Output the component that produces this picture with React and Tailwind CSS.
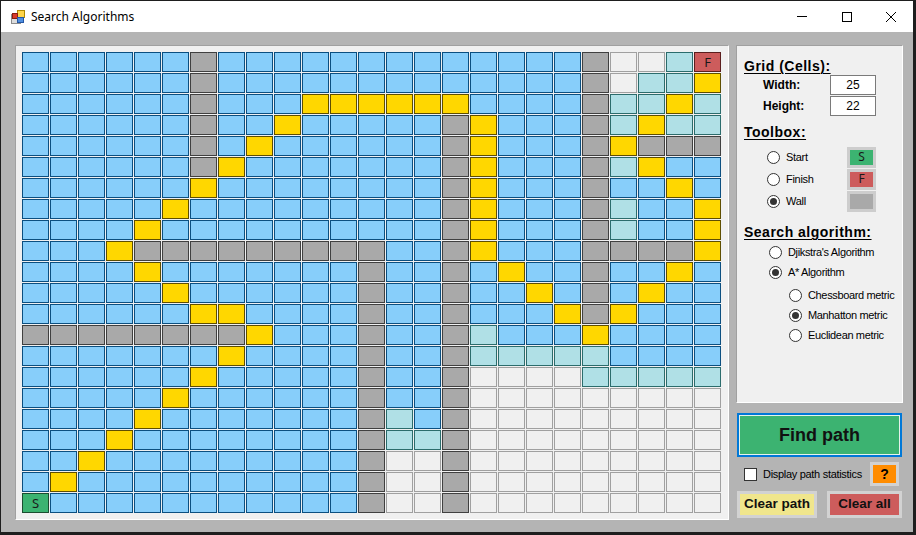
import React from "react";

// grid state: B visited, W wall, Y path, C frontier, E empty, S start, F finish
const ROWS = [
  "BBBBBBWBBBBBBBBBBBBBWEECF",
  "BBBBBBWBBBBBBBBBBBBBWECCY",
  "BBBBBBWBBBYYYYYYBBBBWCCYC",
  "BBBBBBWBBYBBBBBWYBBBWCYCC",
  "BBBBBBWBYBBBBBBWYBBBWYWWW",
  "BBBBBBWYBBBBBBBWYBBBWCYBB",
  "BBBBBBYBBBBBBBBWYBBBWBBYB",
  "BBBBBYBBBBBBBBBWYBBBWCBBY",
  "BBBBYBBBBBBBBBBWYBBBWCBBY",
  "BBBYWWWWWWWWWBBWYBBBWWWWY",
  "BBBBYBBBBBBBWBBWBYBBWBBYB",
  "BBBBBYBBBBBBWBBWBBYBWBYBB",
  "BBBBBBYYBBBBWBBWBBBYWYBBB",
  "WWWWWWWWYBBBWBBWCBBBYBBBB",
  "BBBBBBBYBBBBWBBWCCCCCBBBB",
  "BBBBBBYBBBBBWBBWEEEECCCCC",
  "BBBBBYBBBBBBWBBWEEEEEEEEE",
  "BBBBYBBBBBBBWCBWEEEEEEEEE",
  "BBBYBBBBBBBBWCCWEEEEEEEEE",
  "BBYBBBBBBBBBWEEWEEEEEEEEE",
  "BYBBBBBBBBBBWEEWEEEEEEEEE",
  "SBBBBBBBBBBBWEEWEEEEEEEEE",
];

const CELL = {
  B: "bg-[#87cefa] border-[#0b4f80]",
  W: "bg-[#a9a9a9] border-[#404040]",
  Y: "bg-[#ffd700] border-[#5e4e00]",
  C: "bg-[#b0e0e6] border-[#2b6c6c]",
  E: "bg-[#f0f0f0] border-[#a0a0a0]",
  S: "bg-[#3cb371] border-[#1b4d30]",
  F: "bg-[#cd5c5c] border-[#5b1e1e]",
};

function AppIcon() {
  return (
    <svg width="14" height="14" viewBox="0 0 14 14">
      <rect x="0.5" y="4.5" width="9" height="9" fill="#dcdcdc" stroke="#8c8c8c" />
      <rect x="6.5" y="0.5" width="7" height="7" fill="#ffd54a" stroke="#b08a00" />
      <rect x="1.5" y="3.5" width="5" height="5" fill="#d83b2b" stroke="#8a1c10" />
      <rect x="6.5" y="7.5" width="6" height="5" fill="#4f8fe0" stroke="#2456a4" />
    </svg>
  );
}

function TitleBar() {
  return (
    <div className="flex h-[31px] items-center bg-white">
      <div className="ml-[10px]">
        <AppIcon />
      </div>
      <span className="ml-[6px] font-['Noto_Sans',sans-serif] text-[12px] text-black">
        Search Algorithms
      </span>
      <div className="ml-auto flex h-full">
        <div className="flex w-[45px] items-center justify-center">
          <div className="h-px w-[10px] bg-black" />
        </div>
        <div className="flex w-[45px] items-center justify-center">
          <div className="h-[10px] w-[10px] border border-black" />
        </div>
        <div className="flex w-[44px] items-center justify-center">
          <svg width="10" height="10" viewBox="0 0 10 10">
            <path d="M0 0L10 10M10 0L0 10" stroke="#000" strokeWidth="1" />
          </svg>
        </div>
      </div>
    </div>
  );
}

function GridPanel() {
  return (
    <div className="h-[475px] w-[714px] border border-t-[#a0a0a0] border-l-[#a0a0a0] border-b-white border-r-white bg-[#f0f0f0] pl-[6px] pt-[6px]">
      <div className="grid grid-cols-[repeat(25,27px)] auto-rows-[20px] gap-px">
        {ROWS.map((row, r) =>
          row.split("").map((c, i) => (
            <div
              key={`${r}-${i}`}
              className={`flex items-center justify-center border font-['Noto_Sans',sans-serif] text-[13px] leading-none text-[#1a1a1a] ${CELL[c]}`}
            >
              {c === "S" || c === "F" ? c : null}
            </div>
          ))
        )}
      </div>
    </div>
  );
}

function Radio({ checked }) {
  return (
    <span className="flex h-[13px] w-[13px] shrink-0 items-center justify-center rounded-full border border-[#333] bg-white">
      {checked && <span className="h-[7px] w-[7px] rounded-full bg-[#333]" />}
    </span>
  );
}

function Heading({ children, className = "" }) {
  return (
    <div
      className={`flex h-[18px] items-center pl-[7px] text-[14px] font-bold leading-none tracking-[0.5px] text-black underline decoration-1 underline-offset-[2px] ${className}`}
    >
      {children}
    </div>
  );
}

function Swatch({ className, label }) {
  return (
    <div
      className={`flex h-[21px] w-[29px] items-center justify-center border-[3px] border-[#cdcdcd] font-['Noto_Sans',sans-serif] text-[12px] leading-none text-[#1a1a1a] ${className}`}
    >
      {label}
    </div>
  );
}

function ToolRow({ label, checked, swatch, swatchLabel }) {
  return (
    <div className="flex h-[22px] items-center pl-[30px]">
      <Radio checked={checked} />
      <span className="ml-[6px] w-[61px] text-[11px] tracking-[-0.3px] text-black">{label}</span>
      <Swatch className={swatch} label={swatchLabel} />
    </div>
  );
}

function OptionRow({ label, checked, indent }) {
  return (
    <div className={`flex h-[20px] items-center ${indent}`}>
      <Radio checked={checked} />
      <span className="ml-[6px] text-[11px] tracking-[-0.35px] text-black">{label}</span>
    </div>
  );
}

function Sidebar() {
  return (
    <div className="flex w-[167px] flex-col">
      <div className="flex h-[358px] flex-col border border-t-[#a0a0a0] border-l-[#a0a0a0] border-b-white border-r-white bg-[#f0f0f0]">
        <Heading className="mt-[11px]">Grid (Cells):</Heading>
        <div className="flex h-[20px] items-center pl-[26px]">
          <span className="w-[67px] text-[12px] font-bold text-black">Width:</span>
          <div className="flex h-[20px] w-[46px] items-center justify-center border border-[#7a7a7a] bg-white text-[12px] text-black">
            25
          </div>
        </div>
        <div className="mt-px flex h-[20px] items-center pl-[26px]">
          <span className="w-[67px] text-[12px] font-bold text-black">Height:</span>
          <div className="flex h-[20px] w-[46px] items-center justify-center border border-[#7a7a7a] bg-white text-[12px] text-black">
            22
          </div>
        </div>

        <Heading className="mt-[7px]">Toolbox:</Heading>
        <div className="mt-[5px]">
          <ToolRow label="Start" swatch="bg-[#3cb371]" swatchLabel="S" />
          <ToolRow label="Finish" swatch="bg-[#cd5c5c]" swatchLabel="F" />
          <ToolRow label="Wall" checked swatch="bg-[#a9a9a9]" />
        </div>

        <Heading className="mt-[11px]">Search algorithm:</Heading>
        <div className="mt-px">
          <OptionRow label="Djikstra's Algorithm" indent="pl-[32px]" />
          <OptionRow label="A* Algorithm" checked indent="pl-[32px]" />
        </div>
        <div className="mt-[3px]">
          <OptionRow label="Chessboard metric" indent="pl-[52px]" />
          <OptionRow label="Manhatton metric" checked indent="pl-[52px]" />
          <OptionRow label="Euclidean metric" indent="pl-[52px]" />
        </div>
      </div>

      <button className="ml-px mt-[10px] flex h-[44px] w-[165px] items-center justify-center border-2 border-[#0078d7] bg-[#3cb371] text-[18px] font-bold text-[#111] shadow-[inset_0_0_0_1px_#e6f2ea]">
        Find path
      </button>

      <div className="mt-[5px] flex h-[24px] items-center pl-[8px] pr-[4px]">
        <span className="h-[13px] w-[13px] border border-[#333] bg-white" />
        <span className="ml-[6px] text-[11px] tracking-[-0.3px] text-black">Display path statistics</span>
        <button className="ml-auto flex h-[24px] w-[29px] items-center justify-center border-[3px] border-[#d2d2d2] bg-[#ff8c00] text-[14px] font-bold text-black">
          ?
        </button>
      </div>

      <div className="mt-[5px] flex h-[27px] gap-[10px] pl-px">
        <button className="flex h-full w-[80px] items-center justify-center border-[3px] border-[#d2d2d2] bg-[#f0e68c] text-[13.5px] font-bold text-[#111]">
          Clear path
        </button>
        <button className="flex h-full w-[75px] items-center justify-center border-[3px] border-[#d2d2d2] bg-[#cd5c5c] text-[13.5px] font-bold text-[#111]">
          Clear all
        </button>
      </div>
    </div>
  );
}

export default function App() {
  return (
    <div className="h-[535px] w-[916px] bg-[#1e1e1e] pb-[3px] pl-px pr-[3px] pt-px font-['Liberation_Sans',Arial,sans-serif]">
      <div className="flex h-full flex-col">
        <TitleBar />
        <div className="flex flex-1 gap-[7px] bg-[#b4b4b4] pl-[14px] pt-[13px]">
          <GridPanel />
          <Sidebar />
        </div>
      </div>
    </div>
  );
}
